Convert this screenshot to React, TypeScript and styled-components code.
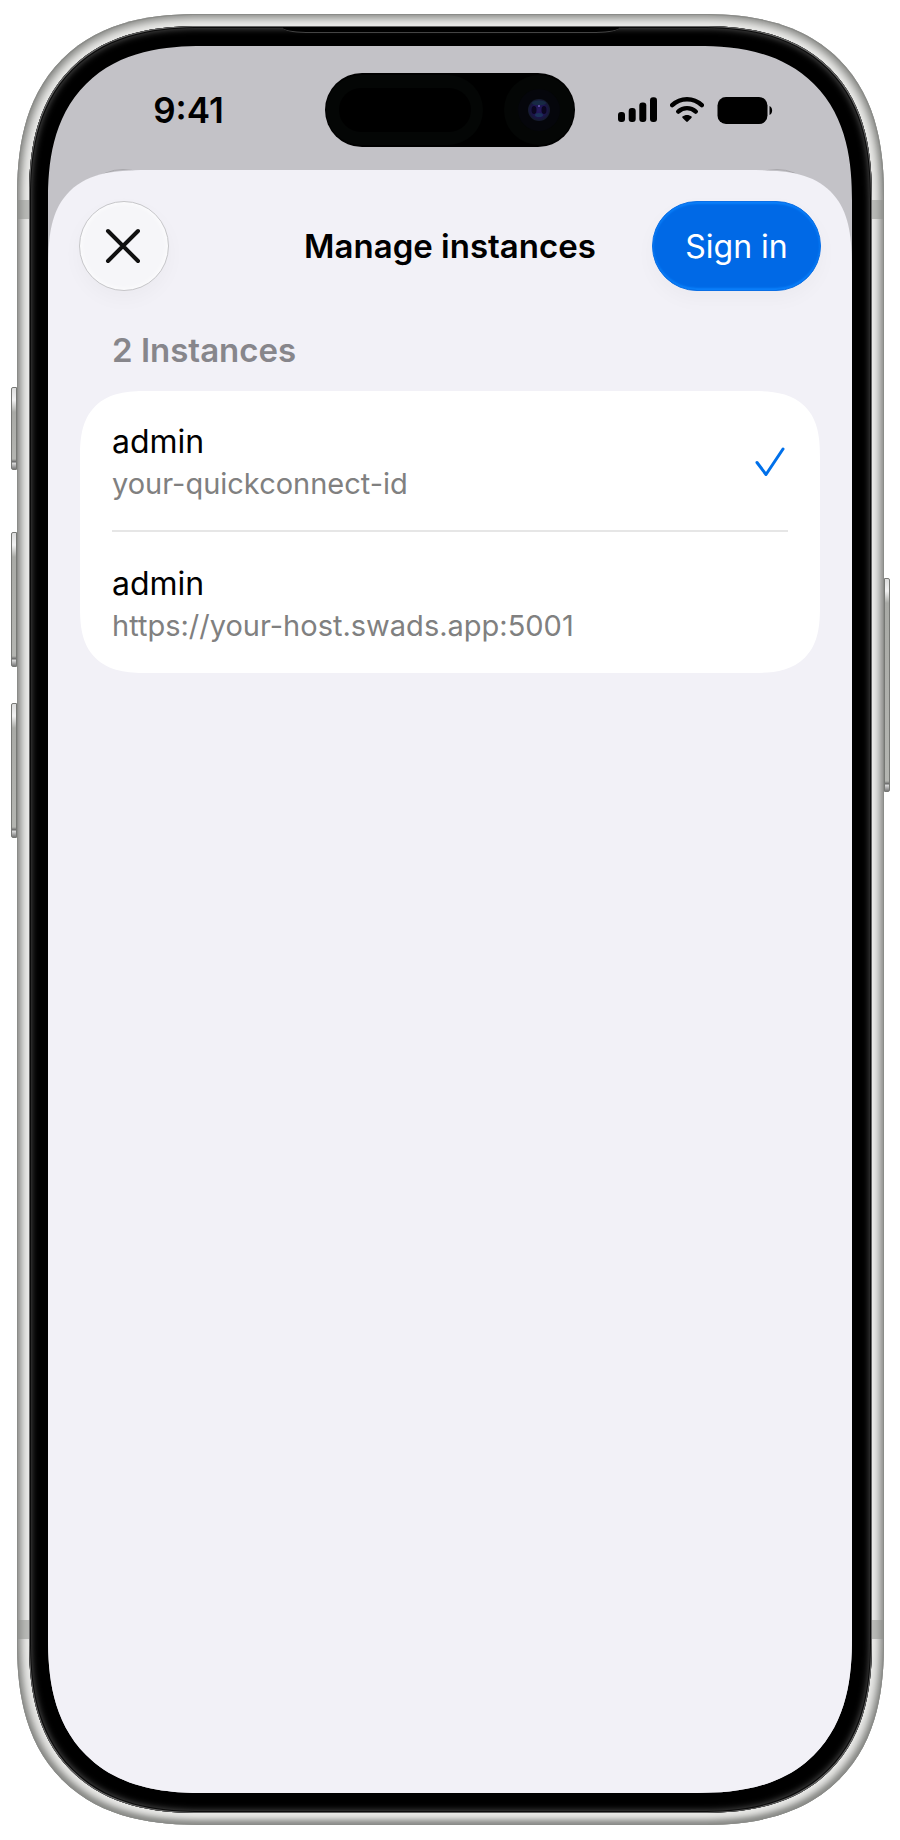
import React from "react";
import styled, { createGlobalStyle } from "styled-components";

const Global = createGlobalStyle`
  *, *::before, *::after { box-sizing: border-box; }
  body { margin: 0; background: #fff; font-family: Inter, "Liberation Sans", sans-serif; color: #000; }
`;

const Page = styled.main`
  display: flex;
  min-height: 100vh;
  padding: 14px 16px 15px 17px;
`;

const Frame = styled.div`
  position: relative;
  flex: 1;
  display: flex;
  padding: 12px;
  border-radius: 184px;
  corner-shape: superellipse(1.3);
  background: #ebebe9;
  box-shadow: inset 0 0 0 1px #8b8c89, inset 0 -3px 5px #8b8c89, inset 0 0 8px 4px #858683;
`;

const Bezel = styled.div`
  position: relative;
  flex: 1;
  display: flex;
  padding: 20px 20px 20px 19px;
  border-radius: 172px;
  corner-shape: superellipse(1.3);
  background: #000;
  box-shadow: inset 0 0 0 1px #666, inset 0 0 0 2px #0c0c0c, inset 0 0 7px 2px #5a5a5a;
`;

const Speaker = styled.span`
  position: absolute;
  top: 1px;
  left: 50%;
  width: 338px;
  height: 6px;
  transform: translateX(-50%);
  background: #000;
  border-bottom: 1px solid #444;
  border-radius: 0 0 24px 24px / 0 0 6px 6px;
`;

const Screen = styled.div`
  flex: 1;
  display: flex;
  flex-direction: column;
  overflow: hidden;
  border-radius: 155px;
  corner-shape: superellipse(1.3);
  background: #c3c2c7;
`;

const SideKey = styled.span<{ $side: "left" | "right"; $top: number; $height: number }>`
  position: absolute;
  top: ${(p) => p.$top}px;
  ${(p) => p.$side}: -6px;
  width: 6px;
  height: ${(p) => p.$height}px;
  border: 1px solid #777875;
  border-radius: ${(p) => (p.$side === "left" ? "2px 0 0 2px" : "0 2px 2px 0")};
  background: linear-gradient(#ddd, #f2f2f2 12px, #a9aaa6 24px, #b4b5b1 calc(100% - 10px), #666 calc(100% - 7px), #ddd calc(100% - 6px), #777);
`;

const Antenna = styled.span<{ $side: "left" | "right"; $edge: "top" | "bottom" }>`
  position: absolute;
  ${(p) => p.$side}: 0;
  ${(p) => p.$edge}: 186px;
  width: 12px;
  height: 19px;
  background: rgba(140, 141, 138, 0.5);
`;

const StatusBar = styled.header`
  display: grid;
  grid-template-columns: 1fr 250px 1fr;
  align-items: center;
  height: 124px;
  padding-top: 4px;
`;

const Clock = styled.time`
  justify-self: center;
  padding-left: 4px;
  font-size: 35px;
  line-height: 40px;
  font-weight: 600;
`;

const Island = styled.div`
  height: 74px;
`;

const StatusIcons = styled.div`
  justify-self: center;
  display: flex;
  align-items: center;
  gap: 13px;
  padding-right: 36px;
`;

const CoveredControls = styled.div`
  display: flex;
  justify-content: space-between;
  height: 90px;
  margin: -1px 30px -89px;
`;

const CoveredControl = styled.span`
  width: 90px;
  height: 90px;
  border: 1px solid #a9a8ac;
  border-radius: 50%;
`;

const Sheet = styled.section`
  position: relative;
  flex: 1;
  padding: 31px 32px;
  border-radius: 105px 105px 0 0;
  corner-shape: superellipse(1.6);
  background: #f2f1f7;
`;

const Toolbar = styled.div`
  display: grid;
  grid-template-columns: 1fr auto 1fr;
  align-items: center;
  margin: 0 -1px;
`;

const Title = styled.h1`
  margin: 0;
  font-size: 33px;
  line-height: 40px;
  font-weight: 600;
`;

const CloseButton = styled.button`
  display: grid;
  place-items: center;
  width: 90px;
  height: 90px;
  padding: 0 2px 0 0;
  border: 1px solid #c6c6c9;
  border-radius: 50%;
  background: #f6f6f9;
  box-shadow: inset 0 0 6px #fff, 0 8px 20px rgba(0, 0, 0, 0.03);
`;

const SignInButton = styled.button`
  justify-self: end;
  width: 169px;
  height: 90px;
  padding: 2px 0 0;
  border: 1px solid #0a6fe6;
  border-radius: 45px;
  background: #0069e6;
  box-shadow: inset 0 2px 2px #0a80fa, inset 0 -2px 2px #0a80fa, 0 8px 20px rgba(0, 0, 0, 0.03);
  color: #fff;
  font: inherit;
  font-size: 32px;
  line-height: 40px;
`;

const SectionLabel = styled.h2`
  margin: 39px 32px 21px;
  font-size: 33px;
  line-height: 40px;
  font-weight: 600;
  color: #87868b;
`;

const List = styled.ul`
  margin: 0;
  padding: 0 32px;
  list-style: none;
  border-radius: 66px;
  corner-shape: superellipse(1.4);
  background: #fff;
`;

const Row = styled.li`
  height: 141px;
  &:not(:last-child) { border-bottom: 2px solid #e6e6e6; }
`;

const RowButton = styled.button`
  display: flex;
  align-items: center;
  justify-content: space-between;
  width: 100%;
  height: 100%;
  padding: 3px 2px 0 0;
  border: 0;
  background: none;
  font: inherit;
  color: #000;
  text-align: left;
`;

const Name = styled.span`
  display: block;
  font-size: 32px;
  line-height: 44px;
`;

const Address = styled.span`
  display: block;
  font-size: 29px;
  line-height: 40px;
  color: #808080;
`;

const instances = [
  { name: "admin", address: "your-quickconnect-id", selected: true },
  { name: "admin", address: "https://your-host.swads.app:5001", selected: false },
];

const Signal = () => (
  <svg width="39" height="26" viewBox="0 0 39 26" aria-hidden="true">
    <rect x="0" y="15" width="7" height="10" rx="3" />
    <rect x="10.7" y="11" width="7" height="14" rx="3" />
    <rect x="21.3" y="5.5" width="7" height="19.5" rx="3" />
    <rect x="32" y="0.2" width="7" height="24.8" rx="3" />
  </svg>
);

const Wifi = () => (
  <svg width="34" height="26" viewBox="0 0 34 26" aria-hidden="true" fill="none" stroke="#000" strokeLinecap="round">
    <path d="M2.2 8.2C10.5 0.2 23.5 0.2 31.8 8.2" strokeWidth="4.4" />
    <path d="M8.2 14.6C13.2 9.9 20.8 9.9 25.8 14.6" strokeWidth="4.4" />
    <path d="M12.4 19.6C15 17.3 19 17.3 21.6 19.6Q22 20.3 21.4 21L17.8 24.6Q17 25.2 16.2 24.6L12.6 21Q12 20.3 12.4 19.6Z" fill="#000" stroke="none" />
  </svg>
);

const Battery = () => (
  <svg width="56" height="27" viewBox="0 0 56 27" aria-hidden="true">
    <rect x="0.5" width="50" height="27" rx="8.5" />
    <path d="M52.5 9C56 10.4 56 16.6 52.5 18Z" />
  </svg>
);

const IslandArt = () => (
  <svg width="250" height="74" viewBox="0 0 250 74" aria-hidden="true">
    <defs>
      <radialGradient id="lens">
        <stop offset="0" stopColor="#251a5c" />
        <stop offset="0.6" stopColor="#1d1250" />
        <stop offset="1" stopColor="#141b2c" />
      </radialGradient>
    </defs>
    <rect width="250" height="74" rx="37" />
    <rect x="1" y="2" width="157" height="70" rx="35" fill="#040605" />
    <rect x="14" y="15" width="132" height="44" rx="22" />
    <circle cx="214" cy="37" r="35" fill="#040605" />
    <circle cx="214" cy="37" r="21" fill="#05060b" />
    <circle cx="214" cy="37" r="11" fill="url(#lens)" />
    <ellipse cx="214" cy="30" rx="7" ry="2.5" fill="#172a44" />
    <ellipse cx="209" cy="37" rx="2.5" ry="4" fill="#0b0620" />
    <ellipse cx="219" cy="37" rx="2.5" ry="4" fill="#0b0620" />
    <ellipse cx="214" cy="42" rx="4" ry="2" fill="#1a3157" />
    <circle cx="214" cy="33" r="1" fill="#6a5ab0" />
  </svg>
);

export default function App() {
  return (
    <>
      <Global />
      <Page>
        <Frame>
          <SideKey $side="left" $top={373} $height={83} />
          <SideKey $side="left" $top={518} $height={135} />
          <SideKey $side="left" $top={689} $height={135} />
          <SideKey $side="right" $top={564} $height={214} />
          <Antenna $side="left" $edge="top" />
          <Antenna $side="right" $edge="top" />
          <Antenna $side="left" $edge="bottom" />
          <Antenna $side="right" $edge="bottom" />
          <Bezel>
            <Speaker />
            <Screen>
              <StatusBar>
                <Clock>9:41</Clock>
                <Island><IslandArt /></Island>
                <StatusIcons>
                  <Signal />
                  <Wifi />
                  <Battery />
                </StatusIcons>
              </StatusBar>
              <CoveredControls aria-hidden="true">
                <CoveredControl />
                <CoveredControl />
              </CoveredControls>
              <Sheet aria-labelledby="sheet-title">
                <Toolbar>
                  <CloseButton type="button" aria-label="Close">
                    <svg width="36" height="36" viewBox="0 0 36 36" fill="none" stroke="#111" strokeWidth="4" strokeLinecap="round" aria-hidden="true">
                      <path d="M3 3L33 33M33 3L3 33" />
                    </svg>
                  </CloseButton>
                  <Title id="sheet-title">Manage instances</Title>
                  <SignInButton type="button">Sign in</SignInButton>
                </Toolbar>
                <SectionLabel>2 Instances</SectionLabel>
                <List>
                  {instances.map((item) => (
                    <Row key={item.address}>
                      <RowButton type="button" aria-pressed={item.selected}>
                        <span>
                          <Name>{item.name}</Name>
                          <Address>{item.address}</Address>
                        </span>
                        {item.selected && (
                          <svg width="32" height="32" viewBox="0 0 32 32" fill="none" stroke="#0070ea" strokeWidth="3" strokeLinecap="round" strokeLinejoin="round" aria-hidden="true">
                            <path d="M3 16.5L12 28.5L29 3" />
                          </svg>
                        )}
                      </RowButton>
                    </Row>
                  ))}
                </List>
              </Sheet>
            </Screen>
          </Bezel>
        </Frame>
      </Page>
    </>
  );
}
